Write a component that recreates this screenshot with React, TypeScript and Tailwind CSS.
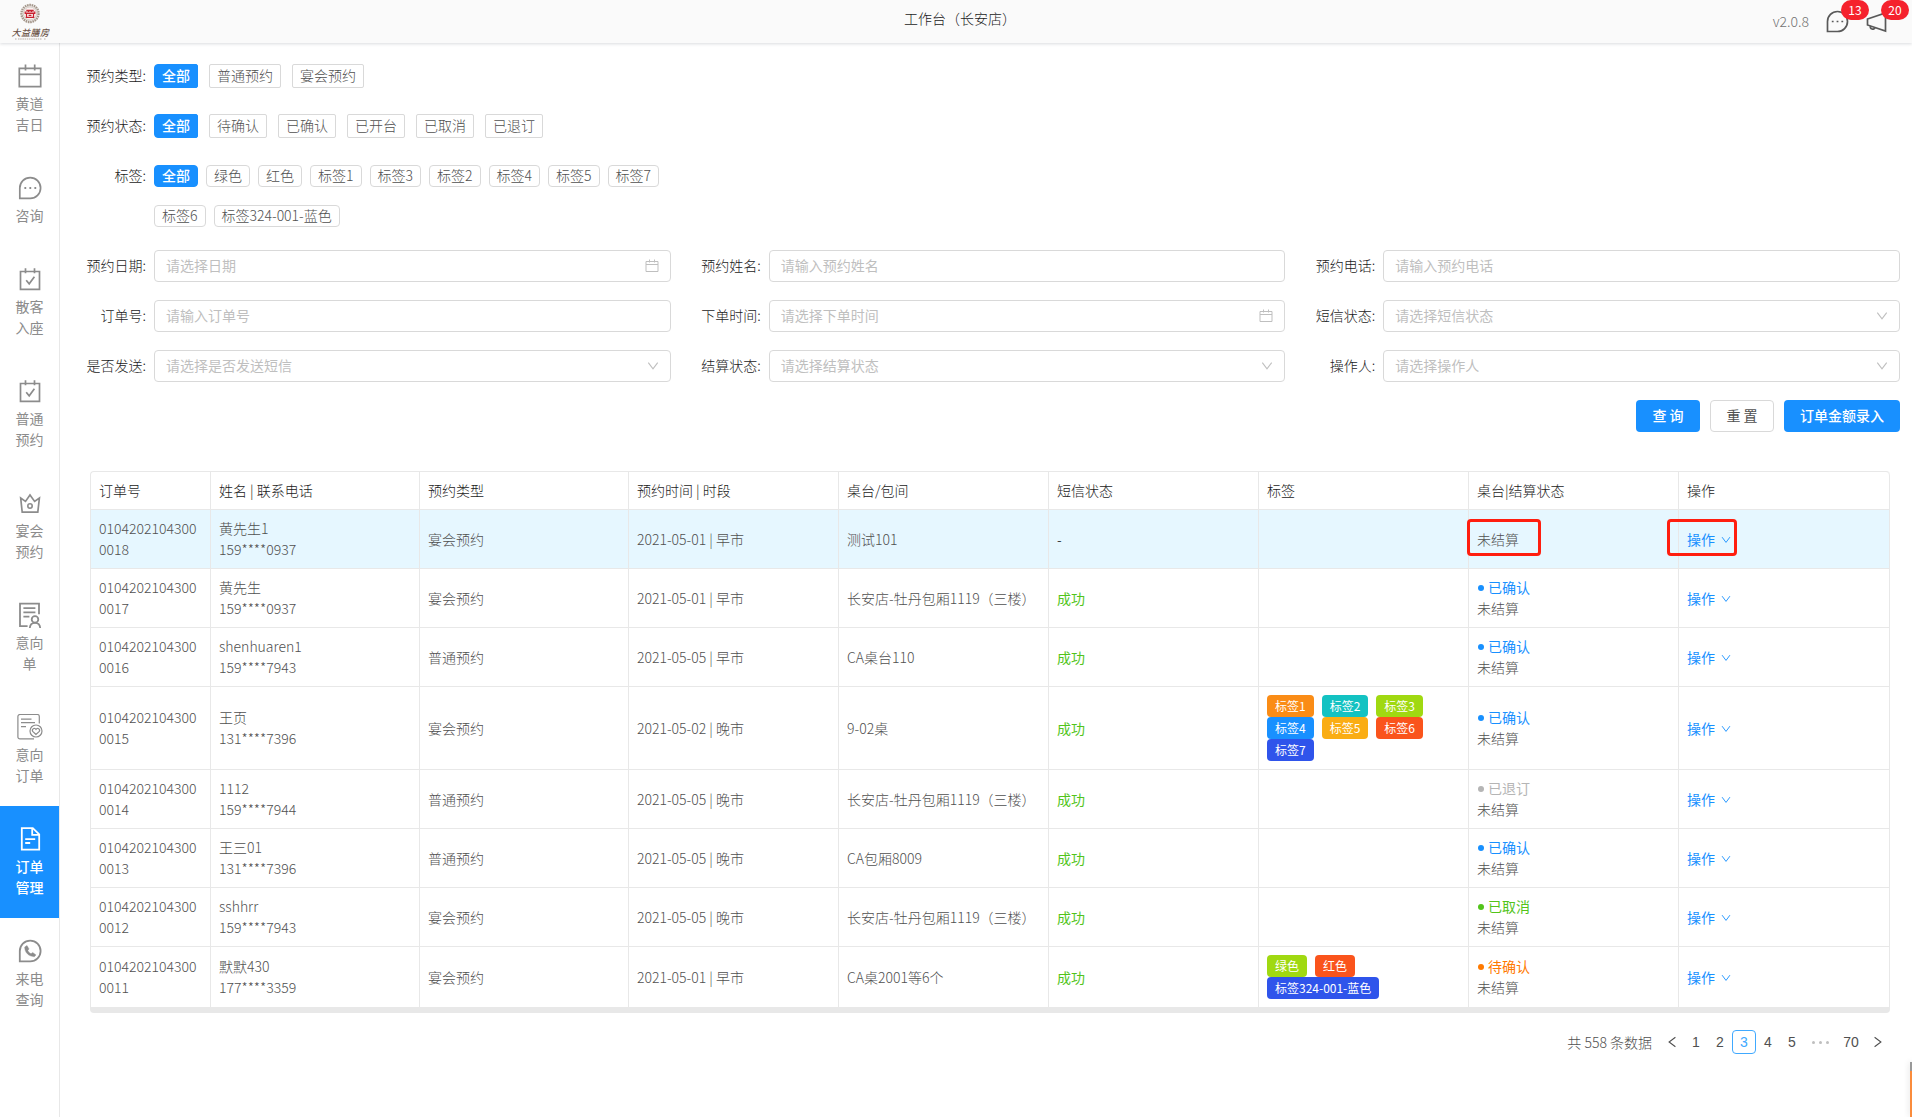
import React, { useState } from "react";

const sideItems = [
  { lines: ["黄道", "吉日"], icon: "calendar" },
  { lines: ["咨询"], icon: "chat" },
  { lines: ["散客", "入座"], icon: "check" },
  { lines: ["普通", "预约"], icon: "check" },
  { lines: ["宴会", "预约"], icon: "crown" },
  { lines: ["意向", "单"], icon: "intent" },
  { lines: ["意向", "订单"], icon: "heart" },
  { lines: ["订单", "管理"], icon: "doc", active: true },
  { lines: ["来电", "查询"], icon: "call" },
];

function Icon({ name }: { name: string }) {
  return (
    <svg aria-hidden="true" viewBox="0 0 26 26" className="mb-1 block size-[26px]" fill="none" stroke="currentColor" strokeWidth="1.8">
      {name === "calendar" && (
        <path d="M2.3 5.3h21.4v18.4H2.3z M2.3 11.3h21.4 M8.5 1.5v6 M17.7 1.5v6" strokeWidth="1.7" />
      )}
      {name === "chat" && (
        <>
          <path d="M2.8 23.4V13A10.4 10.4 0 1 1 13.2 23.4Z" strokeWidth="1.7" />
          <path d="M7.4 13h1.8 M12.4 13h1.8 M17.4 13h1.8" strokeWidth="1.8" />
        </>
      )}
      {name === "check" && (
        <path d="M3.5 5.5h19v17.8h-19z M8.5 2.3v5 M17.5 2.3v5 M9.2 14.2l3 3.6 5.2-7" strokeWidth="1.7" />
      )}
      {name === "crown" && (
        <>
          <path d="M5.2 22.2L3.7 8l4.8 3.4L13 5l4.6 6.4L22.4 8l-1.6 14.2z" strokeWidth="1.7" />
          <circle cx="13" cy="16" r="2.2" strokeWidth="1.6" />
        </>
      )}
      {name === "intent" && (
        <>
          <path d="M10.6 24.1H3V1.6h19v10.6 M6.4 6.2h12 M6.4 10.4h12 M6.4 14.6h6" />
          <circle cx="18" cy="17.4" r="3.3" />
          <path d="M12.8 26c.2-3.6 2.2-5.2 5.2-5.2s5 1.6 5.2 5.2" />
        </>
      )}
      {name === "heart" && (
        <>
          <path d="M17 24.9H2.9a2 2 0 0 1-2-2V2.5a2 2 0 0 1 2-2h17.4a2 2 0 0 1 2 2v7 M4 5.2h10.5 M4 8.7h14 M4 12.7h5" strokeWidth="1.2" />
          <circle cx="19" cy="17" r="6" strokeWidth="1.2" />
          <path d="M19 20.5l-3.3-3.1a1.9 1.9 0 0 1 3.3-2 1.9 1.9 0 0 1 3.3 2z" strokeWidth="1.2" />
        </>
      )}
      {name === "doc" && (
        <path d="M4.8 2.2h11l6.4 6.2v15.2H4.8z M15.2 2.6v6.3h6.6 M8.2 13.2h10 M8.2 17h5" />
      )}
      {name === "call" && (
        <>
          <path d="M2.8 23.4V13A10.4 10.4 0 1 1 13.2 23.4Z" />
          <path d="M7.7 9.1c0 5.5 4 9.3 9.6 9.6l1.7-1.8-3.3-2.4-1.7 1.3c-1.5-.7-2.5-1.7-3.2-3.2l1.2-1.7-2-3.4z" fill="currentColor" strokeWidth=".4" />
        </>
      )}
    </svg>
  );
}

function Logo() {
  return (
    <svg role="img" aria-label="大益膳房" viewBox="0 0 40 38" className="h-[38px] w-10">
      <circle cx="20" cy="10.5" r="8.5" fill="none" stroke="#a39589" strokeWidth="2.4" strokeDasharray="1.6 .7" />
      <circle cx="20" cy="10.5" r="6.6" fill="#f8f1ef" stroke="#c3b4aa" strokeWidth=".7" />
      <path d="M16.300 7.400h7.400M15.200 9h9.600v1.500h-9.600zM16.500 10.500v3.800M23.500 10.500v3.800M15.700 14.300h8.600M18.500 7v2M21.500 7v2M18.600 12.300h2.800" stroke="#c8202f" strokeWidth="1.2" fill="none" />
      <text x="1.5 11 20.5 30" y="32.5" fontSize="9" fontStyle="italic" fontWeight="500" fill="#6b5347" fontFamily="'Noto Sans CJK SC', sans-serif">大益膳房</text>
      <path d="M5 36h1.500M8 36h24M34 36h1.500" stroke="#b8aca3" strokeWidth="1.2" strokeDasharray="1.5 .7" />
    </svg>
  );
}

function Chevron({ className }: { className: string }) {
  return (
    <svg aria-hidden="true" viewBox="0 0 12 12" className={className} fill="none" stroke="currentColor" strokeWidth="1.1">
      <path d="M1.3 2.6L6 8.9l4.7-6.3" />
    </svg>
  );
}

function CalendarMark() {
  return (
    <svg aria-hidden="true" viewBox="0 0 14 14" className="pointer-events-none absolute top-2 right-3 size-3.5 text-[#bfbfbf]" fill="none" stroke="currentColor">
      <path d="M1 3.500h12v10H1z M1 6.500h12 M4.500 1.500v3 M9.500 1.500v3" />
    </svg>
  );
}

const boxCls = "block h-8 w-full min-w-0 rounded border border-[#d9d9d9] bg-white px-[11px] text-sm font-normal outline-none";

type FieldDef = { id: string; label: string; hint: string; kind: "text" | "date" | "select" };
const fields: FieldDef[] = [
  { id: "date", label: "预约日期", hint: "请选择日期", kind: "date" },
  { id: "name", label: "预约姓名", hint: "请输入预约姓名", kind: "text" },
  { id: "phone", label: "预约电话", hint: "请输入预约电话", kind: "text" },
  { id: "order", label: "订单号", hint: "请输入订单号", kind: "text" },
  { id: "time", label: "下单时间", hint: "请选择下单时间", kind: "date" },
  { id: "sms", label: "短信状态", hint: "请选择短信状态", kind: "select" },
  { id: "send", label: "是否发送", hint: "请选择是否发送短信", kind: "select" },
  { id: "settle", label: "结算状态", hint: "请选择结算状态", kind: "select" },
  { id: "operator", label: "操作人", hint: "请选择操作人", kind: "select" },
];

const labelCls = "w-[86px] shrink-0 pr-2 text-right text-[#1a1a1a]";

function Field({ f }: { f: FieldDef }) {
  return (
    <div className="flex">
      <label htmlFor={f.id} className={`${labelCls} leading-[30px]`}>{f.label}:</label>
      <div className="relative min-w-0 flex-1">
        {f.kind === "select" ? (
          <>
            <select id={f.id} defaultValue="" className={`${boxCls} appearance-none pb-0.5 text-[#bfbfbf]`}>
              <option value="">{f.hint}</option>
            </select>
            <Chevron className="pointer-events-none absolute top-2.5 right-3 size-3 text-[#bfbfbf]" />
          </>
        ) : (
          <>
            <input id={f.id} type="text" placeholder={f.hint} className={`${boxCls} pb-0.5 text-[#595959] placeholder:text-[#bfbfbf]`} />
            {f.kind === "date" && <CalendarMark />}
          </>
        )}
      </div>
    </div>
  );
}

function Choices({ label, items, compact }: { label: string; items: string[]; compact?: boolean }) {
  const [on, setOn] = useState(items[0]);
  return (
    <div role="group" aria-label={label} className="flex items-start">
      <span className={`${labelCls} leading-[22px]`}>{label}:</span>
      <div className={compact ? "flex flex-wrap gap-x-2 gap-y-[18px] pt-px" : "flex flex-wrap gap-[11px]"}>
        {items.map((t) => (
          <button
            key={t}
            type="button"
            aria-pressed={on === t}
            onClick={() => setOn(t)}
            className={`border px-[7px] pb-0.5 ${compact ? "h-[22px] rounded leading-[18px]" : "h-6 rounded-xs leading-5"} ${
              on === t ? "border-[#1890ff] bg-[#1890ff] font-medium text-white" : "border-[#d9d9d9] bg-white"
            } ${on === t && !compact ? "rounded-l" : ""}`}
          >
            {t}
          </button>
        ))}
      </div>
    </div>
  );
}

const BLUE = "text-[#1890ff]";
const orange = "bg-[#fa8c16]";
const cyan = "bg-[#13c2c2]";
const lime = "bg-[#a0d911]";
const azure = "bg-[#1890ff]";
const gold = "bg-[#faad14]";
const volcano = "bg-[#fa541c]";
const geek = "bg-[#2f54eb]";

type Row = {
  no: string; name: string; tel: string; type: string; time: string; table: string;
  status?: [string, string]; tags?: [string, string][];
};
const rows: Row[] = [
  { no: "0018", name: "黄先生1", tel: "159****0937", type: "宴会预约", time: "2021-05-01 | 早市", table: "测试101" },
  { no: "0017", name: "黄先生", tel: "159****0937", type: "宴会预约", time: "2021-05-01 | 早市", table: "长安店-牡丹包厢1119（三楼）", status: ["已确认", BLUE] },
  { no: "0016", name: "shenhuaren1", tel: "159****7943", type: "普通预约", time: "2021-05-05 | 早市", table: "CA桌台110", status: ["已确认", BLUE] },
  { no: "0015", name: "王页", tel: "131****7396", type: "宴会预约", time: "2021-05-02 | 晚市", table: "9-02桌", status: ["已确认", BLUE],
    tags: [["标签1", orange], ["标签2", cyan], ["标签3", lime], ["标签4", azure], ["标签5", gold], ["标签6", volcano], ["标签7", geek]] },
  { no: "0014", name: "1112", tel: "159****7944", type: "普通预约", time: "2021-05-05 | 晚市", table: "长安店-牡丹包厢1119（三楼）", status: ["已退订", "text-[#b5b5b5]"] },
  { no: "0013", name: "王三01", tel: "131****7396", type: "普通预约", time: "2021-05-05 | 晚市", table: "CA包厢8009", status: ["已确认", BLUE] },
  { no: "0012", name: "sshhrr", tel: "159****7943", type: "宴会预约", time: "2021-05-05 | 晚市", table: "长安店-牡丹包厢1119（三楼）", status: ["已取消", "text-[#52c41a]"] },
  { no: "0011", name: "默默430", tel: "177****3359", type: "宴会预约", time: "2021-05-01 | 早市", table: "CA桌2001等6个", status: ["待确认", "text-[#ff7a00]"],
    tags: [["绿色", lime], ["红色", volcano], ["标签324-001-蓝色", geek]] },
];
const heads = ["订单号", "姓名 | 联系电话", "预约类型", "预约时间 | 时段", "桌台/包间", "短信状态", "标签", "桌台|结算状态", "操作"];
const pageBtn = "size-6 rounded text-center";
const badge =
  "absolute -top-2.5 left-4 h-5 w-7 rounded-full bg-[#f5222d] text-center text-xs leading-5 font-normal text-white";
const marker = "pointer-events-none absolute -top-2.5 -bottom-1.5 rounded-sm border-3 border-[#ff1e0f]";

export default function App() {
  return (
    <div className="relative flex min-h-screen flex-col overflow-hidden bg-white font-['Noto_Sans_CJK_SC',sans-serif] text-sm leading-[21px] font-light text-[#505050]">
      <header className="relative z-10 grid h-[43px] grid-cols-[1fr_auto_1fr] items-center bg-[#fafafa] shadow-[0_1px_3px_rgba(0,21,41,0.15)]">
        <div className="pl-2.5"><Logo /></div>
        <h1 className="pb-1.5 pl-2 font-light text-[#1a1a1a]">工作台（长安店）</h1>
        <div className="flex items-center justify-end gap-4 pr-[23px] text-[#595959]">
          <span className="text-[#737373]">v2.0.8</span>
          <button type="button" aria-label="消息 13" className="relative">
            <svg viewBox="0 0 24 24" className="size-6" fill="none" stroke="currentColor" strokeWidth="1.7">
              <path d="M2.5 21.5V11.5A10 10 0 1 1 12.5 21.5Z" />
              <path d="M6.8 11.5h1.8M11.6 11.5h1.8M16.4 11.5h1.8" />
            </svg>
            <span className={badge}>13</span>
          </button>
          <button type="button" aria-label="公告 20" className="relative">
            <svg viewBox="0 0 24 24" className="size-6" fill="none" stroke="currentColor" strokeWidth="1.7">
              <path d="M2.5 9L20.5 3v18L2.5 15z" />
              <path d="M5.5 16a2.3 2.3 0 1 0 4.6 1.5" />
            </svg>
            <span className={badge}>20</span>
          </button>
        </div>
      </header>

      <div className="flex flex-1">
        <nav aria-label="主菜单" className="w-[60px] shrink-0 border-r border-[#e8e8e8]">
          {sideItems.map((s) => (
            <a
              key={s.lines.join("")}
              href="#"
              aria-current={s.active ? "page" : undefined}
              className={`flex flex-col items-center py-5 ${s.active ? "bg-[#1890ff] font-medium text-white" : "font-normal text-[#8c8c8c]"}`}
            >
              <Icon name={s.icon} />
              {s.lines.map((l) => <span key={l}>{l}</span>)}
            </a>
          ))}
        </nav>

        <main className="min-w-0 flex-1 py-[21px] pr-3 pl-2">
          <form onSubmit={(e) => e.preventDefault()}>
            <div className="grid grid-cols-3 gap-3">
              <div className="flex flex-col gap-[26px]">
                <Choices label="预约类型" items={["全部", "普通预约", "宴会预约"]} />
                <Choices label="预约状态" items={["全部", "待确认", "已确认", "已开台", "已取消", "已退订"]} />
                <Choices label="标签" compact items={["全部", "绿色", "红色", "标签1", "标签3", "标签2", "标签4", "标签5", "标签7", "标签6", "标签324-001-蓝色"]} />
              </div>
            </div>
            <div className="mt-[23px] grid grid-cols-3 gap-x-3 gap-y-[18px]">
              {fields.map((f) => <Field key={f.id} f={f} />)}
            </div>
            <div className="mt-[18px] flex justify-end gap-2.5">
              <button type="submit" className="h-8 w-16 rounded bg-[#1890ff] pb-0.5 font-medium text-white">查 询</button>
              <button type="reset" className="h-8 w-16 rounded border border-[#d9d9d9] bg-white pb-0.5 font-normal">重 置</button>
              <button type="button" className="h-8 rounded bg-[#1890ff] px-4 pb-0.5 font-medium text-white">订单金额录入</button>
            </div>
          </form>

          <section className="mt-[39px] mr-2.5 ml-[22px]">
            <table className="w-full table-fixed border-separate border-spacing-0 rounded-t border-t border-l border-[#e8e8e8]">
              <colgroup>
                <col className="w-[120px]" />
                <col span={2} className="w-[209px]" />
                <col span={5} className="w-[210px]" />
                <col />
              </colgroup>
              <thead>
                <tr>
                  {heads.map((h) => (
                    <th key={h} scope="col" className="border-r border-b border-[#e8e8e8] p-2 text-left font-light text-[#1a1a1a] last:rounded-tr">{h}</th>
                  ))}
                </tr>
              </thead>
              <tbody>
                {rows.map((r, i) => (
                  <tr key={r.no} className="first:bg-[#e6f7ff] *:border-r *:border-b *:border-[#e8e8e8] *:p-2 last:*:border-b-0">
                    <td className="break-all">0104202104300{r.no}</td>
                    <td><span className="block">{r.name}</span><span className="block">{r.tel}</span></td>
                    <td>{r.type}</td>
                    <td>{r.time}</td>
                    <td className="whitespace-nowrap">{r.table}</td>
                    <td className={i ? "font-normal text-[#52c41a]" : "text-black"}>{i ? "成功" : "-"}</td>
                    <td>
                      {r.tags && (
                        <div className="flex flex-wrap gap-x-2">
                          {r.tags.map(([t, c]) => (
                            <span key={t} className={`${c} h-[22px] rounded px-2 text-xs leading-[22px] font-normal text-white`}>{t}</span>
                          ))}
                        </div>
                      )}
                    </td>
                    <td>
                      {r.status && (
                        <span className={`${r.status[1]} flex items-center gap-1 font-normal`}>
                          <i className="ml-px size-1.5 rounded-full bg-current" />{r.status[0]}
                        </span>
                      )}
                      <span className="relative block w-max">
                        未结算
                        {i === 0 && <span className={`${marker} -right-[22px] -left-2.5`} />}
                      </span>
                    </td>
                    <td>
                      <button type="button" className="relative flex items-center gap-1.5 font-normal text-[#1890ff]">
                        操作 <Chevron className="mt-0.5 size-2.5" />
                        {i === 0 && <span className={`${marker} -right-1.5 -left-5`} />}
                      </button>
                    </td>
                  </tr>
                ))}
              </tbody>
            </table>
            <div className="h-1.5 rounded-b bg-[#e8e8e8]" />
            <nav aria-label="分页" className="mt-[17px] flex items-center justify-end font-['Liberation_Sans','Noto_Sans_CJK_SC',sans-serif] leading-[22px]">
              <span className="mr-2 font-['Noto_Sans_CJK_SC',sans-serif]">共 558 条数据</span>
              <button type="button" aria-label="上一页" className={`${pageBtn} grid place-items-center`}><Chevron className="size-3 rotate-90" /></button>
              <button type="button" className={pageBtn}>1</button>
              <button type="button" className={pageBtn}>2</button>
              <button type="button" aria-current="page" className={`${pageBtn} border border-[#40a9ff] text-[#40a9ff]`}>3</button>
              <button type="button" className={pageBtn}>4</button>
              <button type="button" className={pageBtn}>5</button>
              <span className="flex h-6 w-8 items-center justify-center gap-1">
                <i className="size-[3px] rounded-full bg-[#bfbfbf]" /><i className="size-[3px] rounded-full bg-[#bfbfbf]" /><i className="size-[3px] rounded-full bg-[#bfbfbf]" />
              </span>
              <button type="button" className="h-6 w-[30px]">70</button>
              <button type="button" aria-label="下一页" className={`${pageBtn} grid place-items-center`}><Chevron className="size-3 -rotate-90" /></button>
            </nav>
          </section>
        </main>
      </div>
      <div className="absolute right-0 bottom-0 h-[55px] w-0.5 border-t-9 border-[#999] bg-[#fa8c3c] shadow-[0_0_6px_rgba(0,0,0,0.2)]" />
    </div>
  );
}
